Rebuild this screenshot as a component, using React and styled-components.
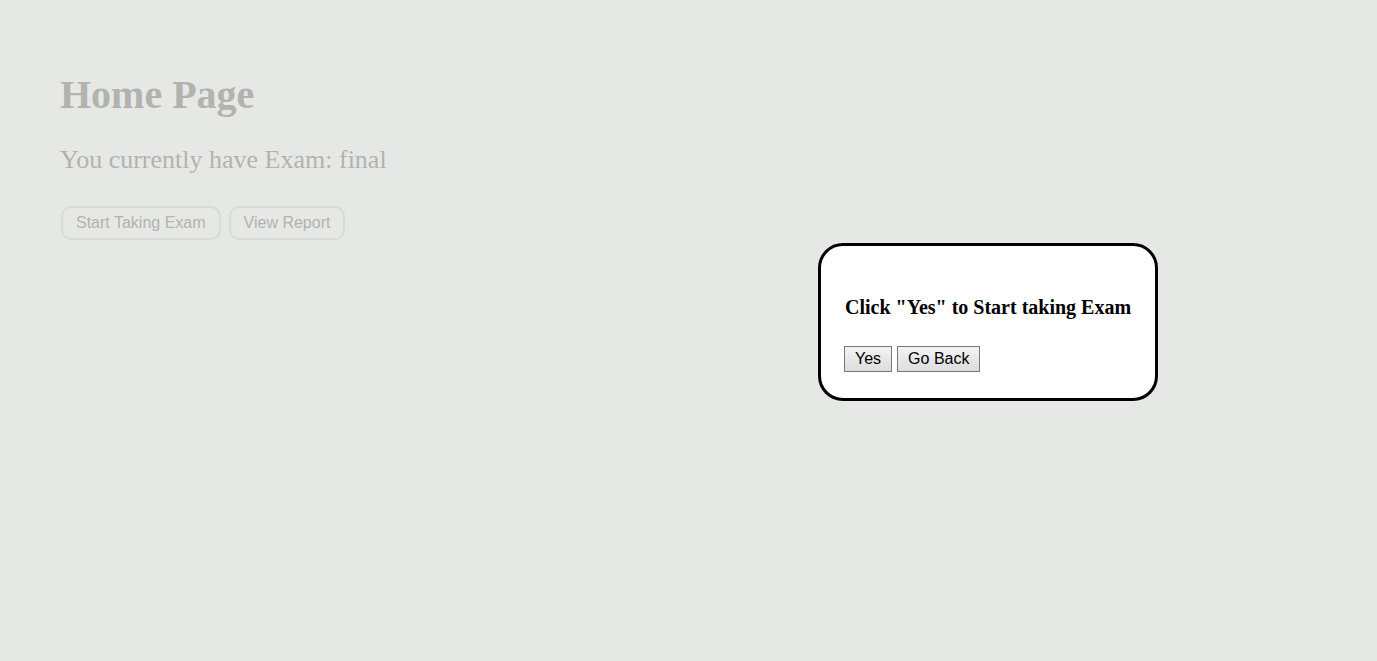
import React from 'react';
import styled, { createGlobalStyle } from 'styled-components';

const GlobalStyle = createGlobalStyle`
  html, body {
    margin: 0;
    padding: 0;
    background: #e6e8e5;
  }
  body {
    font-family: "Liberation Serif", "Times New Roman", serif;
  }
`;

const Page = styled.div`
  min-height: 100vh;
  padding: 71px 61px 0;
  box-sizing: border-box;
  color: #b2b3ae;
`;

const Title = styled.h1`
  margin: 0 0 0 -1px;
  font-size: 40px;
  font-weight: bold;
  line-height: normal;
`;

const Subtitle = styled.p`
  margin: 27px 0 0 -1px;
  font-size: 26px;
  line-height: normal;
`;

const Actions = styled.div`
  display: flex;
  gap: 8px;
  margin-top: 31px;
`;

const GhostButton = styled.button`
  height: 34px;
  padding: 0 13px;
  border: 2px solid #d9dbd8;
  border-radius: 10px;
  background: transparent;
  color: #b2b3ae;
  font-family: "Liberation Sans", Arial, sans-serif;
  font-size: 16px;
  cursor: pointer;
`;

const Overlay = styled.div`
  position: fixed;
  inset: 0;
`;

const Modal = styled.div`
  position: absolute;
  left: 818px;
  top: 243px;
  width: 340px;
  height: 158px;
  box-sizing: border-box;
  padding: 50px 23px 0;
  background: #fff;
  border: 3px solid #000;
  border-radius: 25px;
`;

const ModalTitle = styled.h3`
  margin: 0 0 0 1px;
  font-size: 20px;
  font-weight: bold;
  line-height: normal;
  color: #000;
  white-space: nowrap;
`;

const ModalActions = styled.div`
  display: flex;
  gap: 5px;
  margin-top: 27px;
`;

const PlainButton = styled.button`
  height: 26px;
  padding: 0 10px;
  border: 1px solid #767676;
  border-radius: 0;
  background: linear-gradient(#f3f3f3, #dddddd);
  color: #000;
  font-family: "Liberation Sans", Arial, sans-serif;
  font-size: 16px;
  cursor: pointer;
`;

export default function App() {
  return (
    <>
      <GlobalStyle />
      <Page>
        <Title>Home Page</Title>
        <Subtitle>You currently have Exam: final</Subtitle>
        <Actions>
          <GhostButton>Start Taking Exam</GhostButton>
          <GhostButton>View Report</GhostButton>
        </Actions>
      </Page>
      <Overlay>
        <Modal>
          <ModalTitle>Click "Yes" to Start taking Exam</ModalTitle>
          <ModalActions>
            <PlainButton>Yes</PlainButton>
            <PlainButton>Go Back</PlainButton>
          </ModalActions>
        </Modal>
      </Overlay>
    </>
  );
}
